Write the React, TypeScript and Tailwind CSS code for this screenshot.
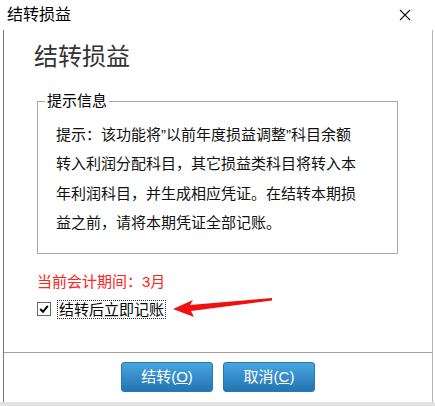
import React from "react";

const FONT = { fontFamily: '"Liberation Sans", "Noto Sans CJK SC", sans-serif' };

export default function App() {
  return (
    <div className="relative w-[435px] h-[406px] bg-white overflow-hidden flex flex-col text-black" style={FONT}>
      {/* title bar */}
      <div className="h-[30px] flex items-center justify-between pl-[7px] pr-[24px] shrink-0">
        <span className="text-[16px] leading-[20px]">结转损益</span>
        <svg width="12" height="12" viewBox="0 0 12 12">
          <path d="M1 1 L11 11 M11 1 L1 11" stroke="#111" strokeWidth="1.1" fill="none" />
        </svg>
      </div>
      {/* client */}
      <div className="flex-1 ml-[3px] mr-[2px] border-l border-l-[#7a7a7a] border-r border-r-[#b5b5b5] flex flex-col">
        <div className="flex-1 pl-[33px] pr-[34px] pt-[12px] flex flex-col">
          <div className="text-[24px] leading-[30px] text-[#333] -ml-[3px]">结转损益</div>
          <div className="relative mt-[29px] h-[153px] border border-[#a8a8a8] pl-[18px] pt-[18px]">
            <span className="absolute -top-[11px] left-[7px] bg-white px-[2px] text-[15px] leading-[20px]">提示信息</span>
            <div className="text-[15px] leading-[29.3px] whitespace-nowrap text-[#111]">
              提示：该功能将”以前年度损益调整”科目余额<br />
              转入利润分配科目，其它损益类科目将转入本<br />
              年利润科目，并生成相应凭证。在结转本期损<br />
              益之前，请将本期凭证全部记账。
            </div>
          </div>
          <div className="mt-[18px] text-[15px] leading-[20px] text-[#ff2222]">当前会计期间：3月</div>
          <div className="mt-[7px] flex items-center h-[20px]">
            <div className="w-[14px] h-[14px] border border-[#666] bg-white flex items-center justify-center">
              <svg width="10" height="10" viewBox="0 0 10 10">
                <path d="M1.2 5 L4 7.8 L8.8 1.8" stroke="#000" strokeWidth="2" fill="none" />
              </svg>
            </div>
            <span className="ml-[6px] border border-dotted border-[#333] px-[1px] text-[15px] leading-[17px]">结转后立即记账</span>
          </div>
        </div>
        <div className="h-[50px] border-t border-t-[#a0a0a0] flex items-center justify-center gap-[10px] pb-[1px]">
          <button className="w-[92px] h-[30px] rounded-[3px] border border-[#2a77b2] bg-linear-to-b from-[#48a6de] to-[#2374b4] text-white text-[15px] leading-[20px]">
            结转(<span className="underline">O</span>)
          </button>
          <button className="w-[92px] h-[30px] rounded-[3px] border border-[#2a77b2] bg-linear-to-b from-[#48a6de] to-[#2374b4] text-white text-[15px] leading-[20px]">
            取消(<span className="underline">C</span>)
          </button>
        </div>
      </div>
      <div className="h-[4px] bg-[#e2e2e2] shrink-0" />
      {/* red annotation arrow */}
      <svg className="absolute left-0 top-0 pointer-events-none" width="435" height="406">
        <polygon points="173,309 193,300 190,305 272,298 272,300.5 191,311 194,317" fill="#f01010" />
      </svg>
    </div>
  );
}
